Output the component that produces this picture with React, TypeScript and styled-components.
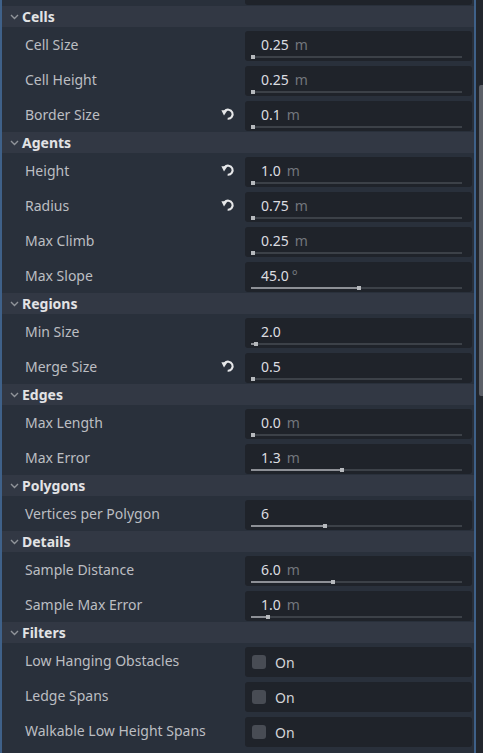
import React from 'react';
import styled, { createGlobalStyle } from 'styled-components';

type Prop =
  | { kind: 'number'; label: string; value: string; unit?: string; pct: number; reset?: boolean }
  | { kind: 'check'; label: string };

interface Section {
  title: string;
  props: Prop[];
}

const sections: Section[] = [
  {
    title: 'Cells',
    props: [
      { kind: 'number', label: 'Cell Size', value: '0.25', unit: 'm', pct: 0 },
      { kind: 'number', label: 'Cell Height', value: '0.25', unit: 'm', pct: 0 },
      { kind: 'number', label: 'Border Size', value: '0.1', unit: 'm', pct: 0, reset: true },
    ],
  },
  {
    title: 'Agents',
    props: [
      { kind: 'number', label: 'Height', value: '1.0', unit: 'm', pct: 0, reset: true },
      { kind: 'number', label: 'Radius', value: '0.75', unit: 'm', pct: 0, reset: true },
      { kind: 'number', label: 'Max Climb', value: '0.25', unit: 'm', pct: 0 },
      { kind: 'number', label: 'Max Slope', value: '45.0', unit: '°', pct: 0.5 },
    ],
  },
  {
    title: 'Regions',
    props: [
      { kind: 'number', label: 'Min Size', value: '2.0', pct: 0.015 },
      { kind: 'number', label: 'Merge Size', value: '0.5', pct: 0, reset: true },
    ],
  },
  {
    title: 'Edges',
    props: [
      { kind: 'number', label: 'Max Length', value: '0.0', unit: 'm', pct: 0 },
      { kind: 'number', label: 'Max Error', value: '1.3', unit: 'm', pct: 0.42 },
    ],
  },
  {
    title: 'Polygons',
    props: [{ kind: 'number', label: 'Vertices per Polygon', value: '6', pct: 0.34 }],
  },
  {
    title: 'Details',
    props: [
      { kind: 'number', label: 'Sample Distance', value: '6.0', unit: 'm', pct: 0.38 },
      { kind: 'number', label: 'Sample Max Error', value: '1.0', unit: 'm', pct: 0.07 },
    ],
  },
  {
    title: 'Filters',
    props: [
      { kind: 'check', label: 'Low Hanging Obstacles' },
      { kind: 'check', label: 'Ledge Spans' },
      { kind: 'check', label: 'Walkable Low Height Spans' },
    ],
  },
];

const GlobalStyle = createGlobalStyle`
  html, body {
    margin: 0;
    padding: 0;
    background: #22262d;
    font-family: "Noto Sans", "DejaVu Sans", sans-serif;
    font-size: 14px;
  }
`;

const Frame = styled.div`
  display: flex;
  width: 483px;
  height: 753px;
  overflow: hidden;
`;

const Inspector = styled.div`
  width: 472px;
  height: 100%;
  border-left: 2px solid #3f6189;
  border-right: 2px solid #3f6189;
  background: #29303b;
  overflow: hidden;
`;

const Content = styled.div`
  display: flex;
  flex-direction: column;
  margin-top: -29px;
`;

const SectionHeader = styled.div`
  display: flex;
  align-items: center;
  height: 21px;
  background: #323844;
  padding-left: 8px;
  gap: 3px;
`;

const HeaderTitle = styled.span`
  font-weight: 700;
  font-size: 14px;
  line-height: 21px;
  color: #e2e3e5;
`;

const PropRow = styled.div`
  display: grid;
  grid-template-columns: 243px 227px;
  height: 35px;
`;

const PropLabel = styled.div`
  display: flex;
  align-items: flex-start;
  justify-content: space-between;
  padding: 8px 10px 0 23px;
  line-height: 19px;
  color: #bcbec2;
  white-space: nowrap;
`;

const ResetIcon = styled.svg`
  margin-top: 2px;
  width: 14px;
  height: 14px;
`;

const Field = styled.div<{ $check?: boolean }>`
  margin-top: 4px;
  height: 30px;
  box-sizing: border-box;
  background: #1f232a;
  border-radius: 3px;
  display: flex;
  flex-direction: ${({ $check }) => ($check ? 'row' : 'column')};
  align-items: ${({ $check }) => ($check ? 'center' : 'stretch')};
  padding-left: ${({ $check }) => ($check ? '7px' : '0')};
`;

const ValueLine = styled.div`
  padding: 4px 0 0 16px;
  height: 19px;
  line-height: 19px;
  color: #dcdde0;
  white-space: nowrap;
`;

const Unit = styled.span<{ $gap: number }>`
  margin-left: ${({ $gap }) => $gap}px;
  color: #72767c;
`;

const SliderTrack = styled.div`
  position: relative;
  margin: 2px 10px 0 6px;
  height: 2px;
  background: #3c4148;
`;

const SliderFill = styled.div`
  height: 100%;
  background: #8d9096;
`;

const SliderGrab = styled.div`
  position: absolute;
  top: -1px;
  width: 4px;
  height: 4px;
  background: #b6b9bd;
`;

const CheckBox = styled.div`
  width: 14px;
  height: 14px;
  border-radius: 3px;
  background: #484c54;
`;

const CheckText = styled.span`
  margin-left: 9px;
  color: #d4d5d8;
  line-height: 19px;
`;

const ScrollTrack = styled.div`
  width: 7px;
  height: 100%;
  background: #22262d;
  display: flex;
  justify-content: flex-end;
`;

const ScrollGrab = styled.div`
  margin-top: 85px;
  width: 4px;
  height: 311px;
  border-radius: 2px 0 0 2px;
  background: #5b5f67;
`;

const Chevron = () => (
  <svg width="9" height="6" viewBox="0 0 9 6">
    <path d="M1 1 L4.5 4.5 L8 1" fill="none" stroke="#90949a" strokeWidth="1.4" />
  </svg>
);

const Reset = () => (
  <ResetIcon viewBox="0 0 16 16">
    <path d="M4 5 A5.2 5.2 0 1 1 7.6 13.4" fill="none" stroke="#e6e7e9" strokeWidth="2.4" />
    <polygon points="0.4,3.8 7.4,3.6 3.4,9.8" fill="#e6e7e9" />
  </ResetIcon>
);

const NumberField = ({ value, unit, pct }: { value: string; unit?: string; pct: number }) => (
  <Field>
    <ValueLine>
      {value}
      {unit && <Unit $gap={unit === '°' ? 3 : 6}>{unit}</Unit>}
    </ValueLine>
    <SliderTrack>
      <SliderFill style={{ width: `${pct * 100}%` }} />
      <SliderGrab style={{ left: `${pct * 100}%` }} />
    </SliderTrack>
  </Field>
);

export default function App() {
  return (
    <>
      <GlobalStyle />
      <Frame>
        <Inspector>
          <Content>
            <PropRow>
              <PropLabel />
              <Field />
            </PropRow>
            {sections.map((s) => (
              <React.Fragment key={s.title}>
                <SectionHeader>
                  <Chevron />
                  <HeaderTitle>{s.title}</HeaderTitle>
                </SectionHeader>
                {s.props.map((p) => (
                  <PropRow key={p.label}>
                    <PropLabel>
                      <span>{p.label}</span>
                      {p.kind === 'number' && p.reset && <Reset />}
                    </PropLabel>
                    {p.kind === 'number' ? (
                      <NumberField value={p.value} unit={p.unit} pct={p.pct} />
                    ) : (
                      <Field $check>
                        <CheckBox />
                        <CheckText>On</CheckText>
                      </Field>
                    )}
                  </PropRow>
                ))}
              </React.Fragment>
            ))}
          </Content>
        </Inspector>
        <ScrollTrack>
          <ScrollGrab />
        </ScrollTrack>
      </Frame>
    </>
  );
}
